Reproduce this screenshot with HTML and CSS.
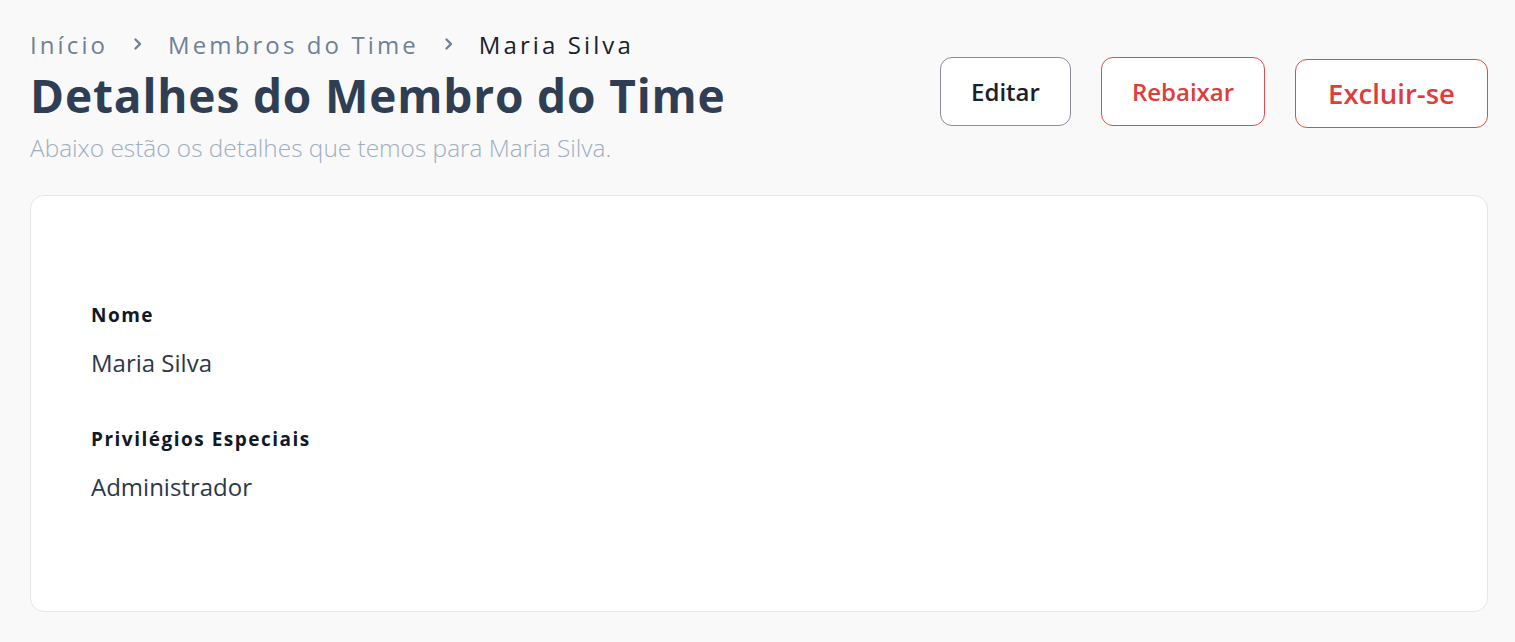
FILE: index.html
```html
<!DOCTYPE html>
<html lang="pt">
<head>
<meta charset="utf-8">
<title>Detalhes do Membro do Time</title>
<link rel="stylesheet" href="styles.css">
</head>
<body>
<main class="page">
  <header class="page-header">
    <div class="heading">
      <nav class="breadcrumb">
        <span class="crumb">Início</span>
        <svg class="chev" width="12" height="14" viewBox="0 0 12 14"><path d="M3.5 2.5 L8 7 L3.5 11.5" fill="none" stroke="currentColor" stroke-width="2.4" stroke-linecap="round" stroke-linejoin="round"/></svg>
        <span class="crumb">Membros do Time</span>
        <svg class="chev" width="12" height="14" viewBox="0 0 12 14"><path d="M3.5 2.5 L8 7 L3.5 11.5" fill="none" stroke="currentColor" stroke-width="2.4" stroke-linecap="round" stroke-linejoin="round"/></svg>
        <span class="crumb current">Maria Silva</span>
      </nav>
      <h1 class="title">Detalhes do Membro do Time</h1>
      <p class="subtitle">Abaixo estão os detalhes que temos para Maria Silva.</p>
    </div>
    <div class="actions">
      <button class="btn btn-edit">Editar</button>
      <button class="btn btn-danger">Rebaixar</button>
      <button class="btn btn-danger btn-big">Excluir-se</button>
    </div>
  </header>
  <section class="card">
    <div class="field">
      <div class="label">Nome</div>
      <div class="value">Maria Silva</div>
    </div>
    <div class="field">
      <div class="label">Privilégios Especiais</div>
      <div class="value">Administrador</div>
    </div>
  </section>
</main>
</body>
</html>
```

FILE: styles.css
```css
* { box-sizing: border-box; }
html, body { margin: 0; padding: 0; }
body {
  background: #f9f9f9;
  font-family: "Open Sans", "Noto Sans", sans-serif;
  color: #2d3748;
}
.page {
  padding: 26px 27px 0 30px;
}
.page-header {
  display: flex;
  justify-content: space-between;
  align-items: flex-start;
}
.heading { padding-left: 0; }
.breadcrumb {
  display: flex;
  align-items: center;
  gap: 24px;
  height: 36px;
}
.crumb {
  font-size: 24px;
  letter-spacing: 3.1px;
  color: #718096;
  font-weight: 400;
}
.crumb.current { color: #1a202c; }
.chev { color: #718096; }
.title {
  margin: 0;
  font-family: "Open Sans", sans-serif;
  font-weight: 700;
  font-size: 46px;
  line-height: 67px;
  letter-spacing: 0.85px;
  color: #2f3e52;
}
.subtitle {
  margin: 4px 0 0;
  font-size: 24.4px;
  line-height: 30px;
  font-weight: 300;
  color: #a0aec0;
}
.actions {
  display: flex;
  align-items: flex-start;
  gap: 30px;
  padding-top: 31px;
}
.btn {
  background: #fff;
  border: 1px solid #8a8c99;
  border-radius: 12px;
  height: 69px;
  padding: 0;
  font-family: "Open Sans", sans-serif;
  font-size: 24px;
  font-weight: 600;
  color: #1a202c;
}
.btn-edit { width: 131px; }
.btn-danger {
  border-color: #e04a4a;
  color: #e03c3c;
  width: 164px;
}
.btn-big { width: 193px; font-size: 27.5px; margin-top: 2px; }
.card {
  margin-top: 32px;
  background: #fff;
  border: 1px solid #e6e6e6;
  border-radius: 14px;
  height: 417px;
  padding: 106px 60px 0;
}
.field { margin-bottom: 48px; }
.label {
  font-size: 19px;
  font-weight: 700;
  letter-spacing: 1.5px;
  color: #111827;
  line-height: 26px;
}
.value {
  margin-top: 20px;
  font-size: 24px;
  color: #2d3748;
  line-height: 30px;
}
```
